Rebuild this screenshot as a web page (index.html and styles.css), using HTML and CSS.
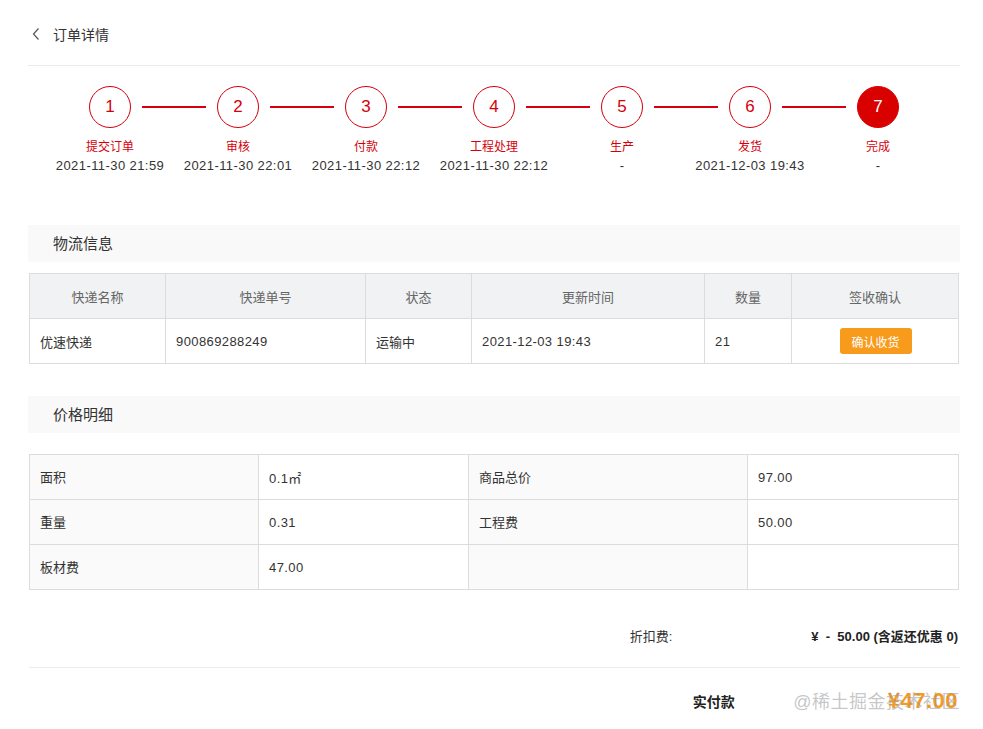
FILE: index.html
```html
<!DOCTYPE html>
<html lang="zh-CN">
<head>
<meta charset="utf-8">
<title>订单详情</title>
<link rel="stylesheet" href="styles.css">
</head>
<body>
<div class="page">
  <div class="topbar">
    <svg class="back" width="10" height="14" viewBox="0 0 10 14"><path d="M7.5 1.5 L2.5 7 L7.5 12.5" fill="none" stroke="#555" stroke-width="1.2"/></svg>
    <span class="title">订单详情</span>
  </div>

  <div class="steps">
    <div class="step">
      <div class="step-top"><span class="seg"></span><span class="circle">1</span><span class="seg on"></span></div>
      <div class="step-name">提交订单</div>
      <div class="step-time">2021-11-30 21:59</div>
    </div>
    <div class="step">
      <div class="step-top"><span class="seg on"></span><span class="circle">2</span><span class="seg on"></span></div>
      <div class="step-name">审核</div>
      <div class="step-time">2021-11-30 22:01</div>
    </div>
    <div class="step">
      <div class="step-top"><span class="seg on"></span><span class="circle">3</span><span class="seg on"></span></div>
      <div class="step-name">付款</div>
      <div class="step-time">2021-11-30 22:12</div>
    </div>
    <div class="step">
      <div class="step-top"><span class="seg on"></span><span class="circle">4</span><span class="seg on"></span></div>
      <div class="step-name">工程处理</div>
      <div class="step-time">2021-11-30 22:12</div>
    </div>
    <div class="step">
      <div class="step-top"><span class="seg on"></span><span class="circle">5</span><span class="seg on"></span></div>
      <div class="step-name">生产</div>
      <div class="step-time">-</div>
    </div>
    <div class="step">
      <div class="step-top"><span class="seg on"></span><span class="circle">6</span><span class="seg on"></span></div>
      <div class="step-name">发货</div>
      <div class="step-time">2021-12-03 19:43</div>
    </div>
    <div class="step">
      <div class="step-top"><span class="seg on"></span><span class="circle active">7</span><span class="seg"></span></div>
      <div class="step-name">完成</div>
      <div class="step-time">-</div>
    </div>
  </div>

  <div class="section-head sh-logistics">物流信息</div>
  <table class="grid logistics">
    <colgroup>
      <col style="width:136px"><col style="width:200px"><col style="width:106px"><col style="width:233px"><col style="width:87px"><col>
    </colgroup>
    <thead>
      <tr><th>快递名称</th><th>快递单号</th><th>状态</th><th>更新时间</th><th>数量</th><th>签收确认</th></tr>
    </thead>
    <tbody>
      <tr>
        <td>优速快递</td><td class="num">900869288249</td><td>运输中</td><td class="num">2021-12-03 19:43</td><td class="num">21</td>
        <td class="center"><button class="confirm">确认收货</button></td>
      </tr>
    </tbody>
  </table>

  <div class="section-head sh-price">价格明细</div>
  <table class="grid price">
    <colgroup>
      <col style="width:229px"><col style="width:210px"><col style="width:279px"><col>
    </colgroup>
    <tbody>
      <tr><td class="lbl">面积</td><td class="num">0.1㎡</td><td class="lbl">商品总价</td><td class="num">97.00</td></tr>
      <tr><td class="lbl">重量</td><td class="num">0.31</td><td class="lbl">工程费</td><td class="num">50.00</td></tr>
      <tr><td class="lbl">板材费</td><td class="num">47.00</td><td class="lbl"></td><td></td></tr>
    </tbody>
  </table>

  <div class="sum-row discount">
    <span class="sum-label">折扣费:</span>
    <span class="sum-value">¥ &nbsp;- &nbsp;50.00 (含返还优惠 0)</span>
  </div>
  <div class="sum-row pay">
    <span class="sum-label pay-label">实付款</span>
    <span class="pay-value">¥47.00</span>
    <span class="watermark">@稀土掘金技术社区</span>
  </div>
</div>
</body>
</html>
```

FILE: styles.css
```css
* { box-sizing: border-box; }
html, body { margin: 0; padding: 0; background: #fff; }
body {
  font-family: "Liberation Sans", "Noto Sans CJK SC", sans-serif;
  color: #333;
  font-size: 13px;
}
.page {
  width: 932px;
  margin-left: 28px;
}
.topbar {
  height: 66px;
  border-bottom: 1px solid #ebebeb;
  display: flex;
  align-items: center;
  padding-left: 3px;
  padding-top: 2px;
}
.back { margin-right: 12px; }
.title { font-size: 14px; color: #333; }

.steps {
  display: flex;
  justify-content: center;
  padding-top: 20px;
}
.step {
  width: 128px;
  display: flex;
  flex-direction: column;
  align-items: center;
}
.step-top {
  width: 100%;
  display: flex;
  align-items: center;
}
.seg {
  flex: 1;
  height: 2px;
}
.seg.on { background: #d5000c; }
.step-top .seg:first-child { margin-right: 11px; }
.step-top .seg:last-child { margin-left: 11px; }
.circle {
  width: 42px;
  height: 42px;
  border-radius: 50%;
  border: 1px solid #d5000c;
  color: #d5000c;
  font-size: 17px;
  display: flex;
  align-items: center;
  justify-content: center;
  flex: none;
}
.circle.active {
  background: #d90000;
  border-color: #d90000;
  color: #fff;
}
.step-name {
  margin-top: 12px;
  font-size: 12px;
  line-height: 14px;
  color: #d5000c;
}
.step-time {
  margin-top: 3px;
  font-size: 13px;
  line-height: 18px;
  color: #333;
  letter-spacing: 0.42px;
}

.section-head {
  height: 37px;
  background: #f9f9f9;
  padding-left: 25px;
  font-size: 15px;
  line-height: 37px;
  color: #333;
}
.sh-logistics { margin-top: 50px; }
.sh-price { margin-top: 32px; }

.grid {
  width: 930px;
  margin-left: 1px;
  border-collapse: collapse;
  table-layout: fixed;
}
.grid th, .grid td {
  border: 1px solid #dcdcdc;
  height: 45px;
  padding: 0 10px;
  font-size: 13px;
  font-weight: normal;
  text-align: left;
  color: #333;
}
.grid td.num { letter-spacing: 0.4px; padding-top: 1px; }
.logistics { margin-top: 11px; }
.logistics th {
  background: #f1f2f4;
  color: #666;
  text-align: center;
}
.logistics td.center { text-align: center; }
.confirm {
  border: none;
  background: #f89a1c;
  color: #fff;
  font-family: inherit;
  font-size: 12px;
  width: 72px;
  height: 26px;
  border-radius: 3px;
  padding: 0;
  margin-left: 1px;
}
.price { margin-top: 21px; }
.price td.lbl { background: #fafafa; padding-bottom: 2px; }

.sum-row {
  display: flex;
  justify-content: flex-end;
  align-items: center;
  padding-right: 2px;
}
.discount {
  height: 78px;
  border-bottom: 1px solid #ebebeb;
  padding-top: 13px;
  margin-left: 1px;
}
.discount .sum-label {
  margin-right: 139px;
  color: #333;
}
.sum-value {
  font-weight: bold;
  color: #222;
}
.pay {
  position: relative;
  height: 60px;
  padding-top: 6px;
}
.pay-label {
  font-weight: bold;
  font-size: 14px;
  color: #222;
  margin-right: 153px;
}
.pay-value {
  font-size: 22px;
  font-weight: bold;
  color: #f59a23;
  letter-spacing: 0.5px;
}
.watermark {
  position: absolute;
  right: 0;
  top: 19px;
  font-size: 18px;
  color: rgba(150, 150, 150, 0.55);
  letter-spacing: 0.5px;
  pointer-events: none;
}
```
